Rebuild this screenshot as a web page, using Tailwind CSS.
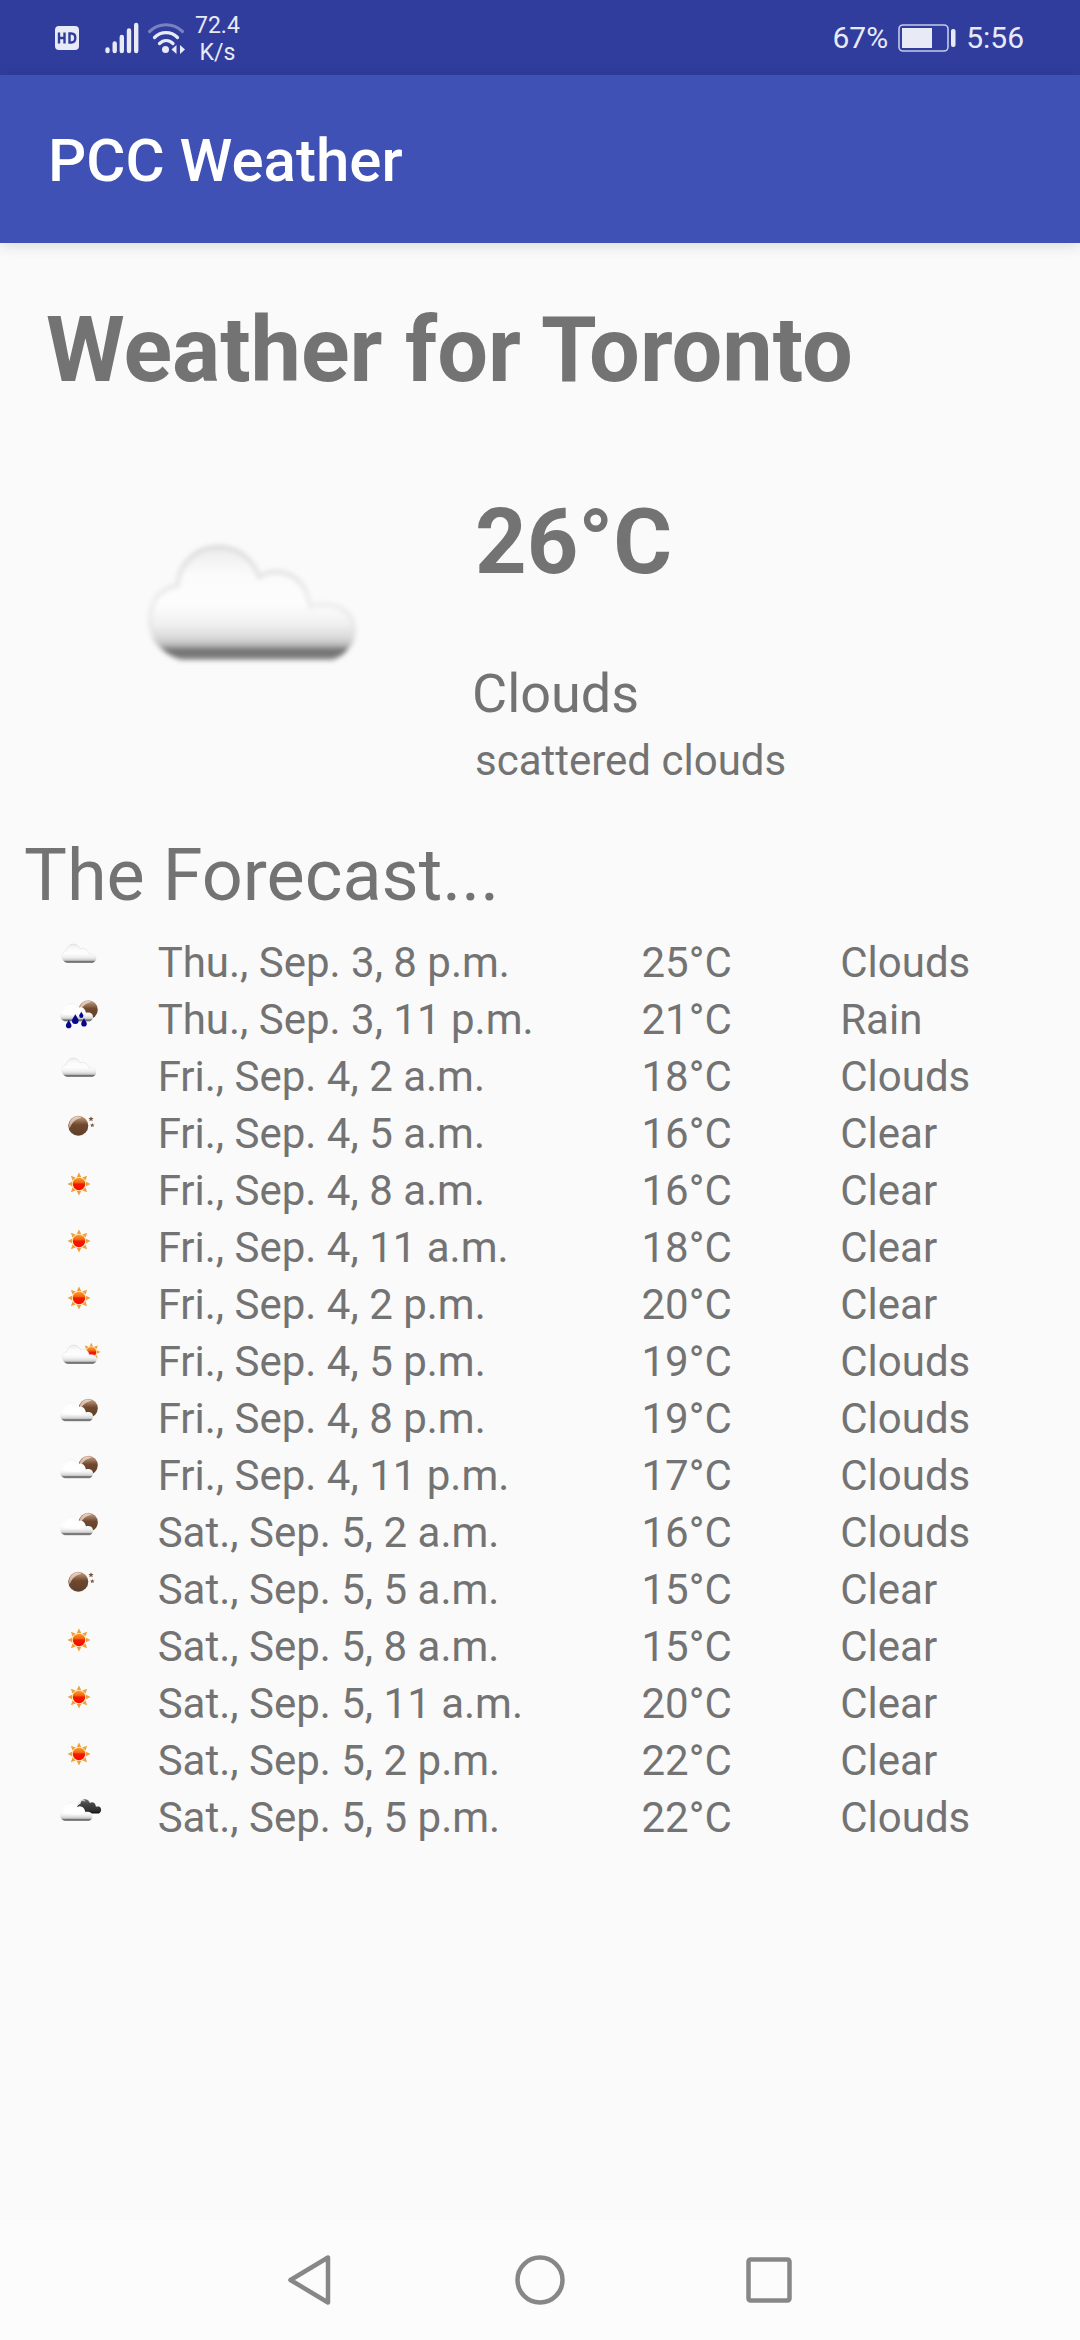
<!DOCTYPE html>
<html lang="en">
<head>
<meta charset="utf-8">
<meta name="viewport" content="width=device-width, initial-scale=1">
<title>PCC Weather</title>
<script src="https://cdn.jsdelivr.net/npm/@tailwindcss/browser@4"></script>
</head>
<body class="flex min-h-screen flex-col bg-[#fafafa] font-['Roboto',sans-serif] text-[#737373]">

<!-- Shared weather icon symbols, 50x50 units each -->
<svg class="absolute size-0" aria-hidden="true">
  <defs>
    <linearGradient id="cloudFill" x1="0" y1="0" x2="0" y2="1">
      <stop offset="0" stop-color="#ececec"/><stop offset=".25" stop-color="#fbfbfb"/><stop offset=".5" stop-color="#fdfdfd"/>
      <stop offset=".68" stop-color="#f1f1f1"/><stop offset=".8" stop-color="#dadada"/><stop offset=".86" stop-color="#c2c2c2"/>
      <stop offset=".91" stop-color="#747474"/><stop offset=".95" stop-color="#727272"/><stop offset="1" stop-color="#969696"/>
    </linearGradient>
    <linearGradient id="cloudEdge" x1="0" y1="0" x2="0" y2="1">
      <stop offset="0" stop-color="#d9d9d9"/><stop offset=".5" stop-color="#ececec"/><stop offset=".8" stop-color="#dcdcdc" stop-opacity=".6"/><stop offset=".9" stop-color="#888" stop-opacity="0"/>
    </linearGradient>
    <linearGradient id="darkCloud" x1="0" y1="0" x2="0" y2="1">
      <stop offset="0" stop-color="#707070"/><stop offset=".35" stop-color="#454545"/><stop offset=".75" stop-color="#333"/><stop offset="1" stop-color="#111"/>
    </linearGradient>
    <linearGradient id="moonFill" x1="0" y1="0" x2="0" y2="1">
      <stop offset="0" stop-color="#c9a58c"/><stop offset=".3" stop-color="#8f684c"/><stop offset=".45" stop-color="#70482d"/><stop offset="1" stop-color="#5e402c"/>
    </linearGradient>
    <linearGradient id="sunFill" x1="0" y1="0" x2="0" y2="1">
      <stop offset="0" stop-color="#ff9d2e"/><stop offset=".4" stop-color="#f2600c"/><stop offset=".5" stop-color="#f01a00"/><stop offset="1" stop-color="#ff0a00"/>
    </linearGradient>
    <filter id="soft" x="-10%" y="-10%" width="120%" height="120%"><feGaussianBlur stdDeviation="0.4"/></filter>
    <path id="cloudPath" d="M5.1 19C2.3 18 .6 16.2.3 14.2 0 13 0 11.8.2 10.6.6 8.4 2.4 6.9 4.6 6.6 4.8 2.8 7.8.2 11.4.2c3.4 0 5.7 2 6.8 5 1.2-.9 2.4-1 3.6-.8 2.8.4 4.3 2.4 4.9 5.7 1.2-.4 2.6-.4 4-.1 2.3.5 3.4 2.2 3.3 4.4-.1 2-1.3 3.7-3.5 4.6Z"/>
    <g id="cloudShape">
      <use href="#cloudPath" fill="url(#cloudFill)"/>
      <use href="#cloudPath" fill="none" stroke="url(#cloudEdge)" stroke-width=".7"/>
    </g>
    <g id="whiteCloud">
      <use href="#cloudPath" fill="url(#cloudFill)"/>
      <path d="M4.8 7C5 3.200 7.800.8 11.400.8c3.400 0 5.200 2 6.300 5 1.200-.9 2.900-1 4.100-.8 2.400.5 3.700 2.400 4.300 5.700L20 13 3 12Z" fill="#fff" opacity=".8"/>
    </g>
    <g id="moonShape">
      <circle r="10" fill="url(#moonFill)"/>
      <path d="M-8.500 2.500A8.500 8.500 0 0 1 3.500-8C-2.500-7-6.500-3.500-8.500 2.500Z" fill="#f5e6dc" opacity=".7"/>
    </g>
    <g id="sunShape">
      <circle r="7.600" fill="#ffe7b0"/>
      <g fill="#eda040">
        <path id="ray" d="M0-11.500 2.200-7H-2.200Z"/>
        <use href="#ray" transform="rotate(45)"/><use href="#ray" transform="rotate(90)"/><use href="#ray" transform="rotate(135)"/>
        <use href="#ray" transform="rotate(180)"/><use href="#ray" transform="rotate(225)"/><use href="#ray" transform="rotate(270)"/><use href="#ray" transform="rotate(315)"/>
      </g>
      <circle r="6.200" fill="url(#sunFill)"/>
    </g>
    <path id="drop" d="M0-5C.7-2.500 3.300-.6 3.300 1.700A3.300 3.300 0 0 1-3.300 1.700C-3.300-.6-.7-2.500 0-5Z" fill="#06068f"/>
    <path id="star" d="M0-2.700.8-.9 2.600-.9 1.200.4 1.700 2.300 0 1.200-1.700 2.300-1.200.4-2.600-.9-.8-.9Z" fill="#80563d"/>
  </defs>
  <symbol id="scattered" viewBox="0 0 50 50"><use href="#cloudShape" x="8" y="16"/></symbol>
  <symbol id="rain" viewBox="0 0 50 50">
    <use href="#moonShape" transform="translate(34.300 24.700) scale(.95)"/>
    <use href="#whiteCloud" transform="translate(6 18) scale(.97)"/>
    <use href="#drop" transform="translate(21.300 34)"/>
    <use href="#drop" transform="translate(27.300 29.700) scale(.65)"/>
    <use href="#drop" transform="translate(14.700 39) scale(.85)"/>
    <use href="#drop" transform="translate(30 37.300) scale(.85)"/>
  </symbol>
  <symbol id="night" viewBox="0 0 50 50">
    <use href="#moonShape" transform="translate(24.300 26.700)"/>
    <use href="#star" x="37" y="20"/><use href="#star" transform="translate(38.300 26.300) scale(.85)"/>
  </symbol>
  <symbol id="sun" viewBox="0 0 50 50"><use href="#sunShape" x="25" y="28"/></symbol>
  <symbol id="few-day" viewBox="0 0 50 50">
    <use href="#sunShape" transform="translate(37.300 25) scale(.8)"/>
    <use href="#cloudShape" x="8.500" y="18"/>
  </symbol>
  <symbol id="few-night" viewBox="0 0 50 50">
    <use href="#moonShape" transform="translate(34.300 24.300) scale(.95)"/>
    <use href="#whiteCloud" transform="translate(6 18.300) scale(.97 1)"/>
  </symbol>
  <symbol id="broken" viewBox="0 0 50 50">
    <use href="#cloudPath" transform="translate(23 16) scale(.71 .76)" fill="url(#darkCloud)"/>
    <path d="M24 22c.5-3.500 3.500-5.500 7-4" fill="none" stroke="#ddd" stroke-width="1"/>
    <use href="#whiteCloud" transform="translate(6 19) scale(.95 1)"/>
  </symbol>
</svg>

<!-- Status bar -->
<div class="flex h-[75px] items-center justify-between bg-[#303d9d] pr-[56px] pl-[55px] text-[#e8eaf6]">
  <div class="flex items-center">
    <svg class="h-6 w-6" viewBox="0 0 24 24" role="img" aria-label="HD voice">
      <rect width="24" height="24" rx="4" fill="#e8eaf6"/>
      <path d="M4 6.500v11M9.500 6.500v11M4 12h5.500M14.500 7.500v9h1.800c3 0 4-1.500 4-4.500s-1-4.500-4-4.500Z" fill="none" stroke="#303d9d" stroke-width="2.400"/>
    </svg>
    <svg class="ml-[26px] h-8 w-[34px]" viewBox="0 0 34 32" role="img" aria-label="Signal strength" stroke="#e8eaf6" stroke-width="4.400" stroke-linecap="round">
      <path d="M2.500 27.500v1.500M9.700 21.500V29M16.800 15V29M24 8.500V29M31.200 3V29"/>
    </svg>
    <svg class="ml-2 h-8 w-[38px]" viewBox="0 0 38 32" role="img" aria-label="Wi-Fi" fill="none" stroke="#e8eaf6" stroke-width="3.200" stroke-linecap="round">
      <path d="M2.500 9.500c9.500-9 23.500-9 33 0" stroke-opacity=".4"/>
      <path d="M7.500 15.500c6.500-6.500 16.500-6.500 23 0M12.500 21.500c4-4 9.500-4 13.500 0"/>
      <circle cx="18.500" cy="27.500" r="3.500" fill="#e8eaf6" stroke="none"/>
      <path d="M29.500 23v9l-5-4.500ZM33 23l5 4.500-5 4.500Z" fill="#e8eaf6" stroke="none"/>
    </svg>
    <p class="ml-[10px] pt-[2px] text-center text-[23px]/[27px]">72.4<br>K/s</p>
  </div>
  <div class="flex items-center gap-[10px] text-[30px]/[36px]">
    <span>67%</span>
    <svg class="h-7 w-[58px]" viewBox="0 0 58 28" role="img" aria-label="Battery">
      <rect x="1" y="1" width="49" height="26" rx="4" fill="none" stroke="#c5cae9" stroke-width="1.600"/>
      <rect x="4" y="4" width="30" height="20" fill="#e8eaf6"/>
      <rect x="53" y="5" width="4.500" height="18" rx="2" fill="#e8eaf6"/>
    </svg>
    <span>5:56</span>
  </div>
</div>

<!-- App bar -->
<header class="flex h-[168px] items-center bg-[#3f51b5] px-12 pt-1 shadow-[0_2px_14px_rgba(0,0,0,0.14)]">
  <h1 class="text-[60px]/[70px] font-medium text-white">PCC Weather</h1>
</header>

<main class="flex-1">
  <h2 class="pt-[55px] pl-[46px] text-[90px]/[106px] font-bold">Weather for Toronto</h2>

  <section class="flex gap-[70px] pt-[46px] pl-[102px]" aria-label="Current weather">
    <svg class="size-[300px] shrink-0" viewBox="0 0 50 50" role="img" aria-label="Clouds"><g filter="url(#soft)"><use href="#cloudShape" x="8" y="16"/></g></svg>
    <div class="pt-10">
      <p class="pl-[3px] text-[90px]/[106px] font-bold">26°C</p>
      <p class="pt-[66px] text-[54px]/[64px]">Clouds</p>
      <p class="pt-[10px] pl-[3px] text-[42px]/[50px]">scattered clouds</p>
    </div>
  </section>

  <h3 class="pt-12 pl-6 text-[72px]/[84px]">The Forecast...</h3>
  <table class="mt-4 w-full table-fixed text-left text-[42px]/[57px] [&_svg]:ml-[54px] [&_svg]:h-[50px] [&_svg]:w-[50px] [&_td]:h-[57px] [&_td]:p-0 [&_td]:align-top [&_svg]:-mt-[6px]" aria-label="Forecast">
    <colgroup><col class="w-[14.6%]"><col class="w-[44.8%]"><col class="w-[18.4%]"><col></colgroup>
    <tbody>
      <tr><td><svg aria-hidden="true"><use href="#scattered"/></svg></td><td>Thu., Sep. 3, 8 p.m.</td><td>25°C</td><td>Clouds</td></tr>
      <tr><td><svg aria-hidden="true"><use href="#rain"/></svg></td><td>Thu., Sep. 3, 11 p.m.</td><td>21°C</td><td>Rain</td></tr>
      <tr><td><svg aria-hidden="true"><use href="#scattered"/></svg></td><td>Fri., Sep. 4, 2 a.m.</td><td>18°C</td><td>Clouds</td></tr>
      <tr><td><svg aria-hidden="true"><use href="#night"/></svg></td><td>Fri., Sep. 4, 5 a.m.</td><td>16°C</td><td>Clear</td></tr>
      <tr><td><svg aria-hidden="true"><use href="#sun"/></svg></td><td>Fri., Sep. 4, 8 a.m.</td><td>16°C</td><td>Clear</td></tr>
      <tr><td><svg aria-hidden="true"><use href="#sun"/></svg></td><td>Fri., Sep. 4, 11 a.m.</td><td>18°C</td><td>Clear</td></tr>
      <tr><td><svg aria-hidden="true"><use href="#sun"/></svg></td><td>Fri., Sep. 4, 2 p.m.</td><td>20°C</td><td>Clear</td></tr>
      <tr><td><svg aria-hidden="true"><use href="#few-day"/></svg></td><td>Fri., Sep. 4, 5 p.m.</td><td>19°C</td><td>Clouds</td></tr>
      <tr><td><svg aria-hidden="true"><use href="#few-night"/></svg></td><td>Fri., Sep. 4, 8 p.m.</td><td>19°C</td><td>Clouds</td></tr>
      <tr><td><svg aria-hidden="true"><use href="#few-night"/></svg></td><td>Fri., Sep. 4, 11 p.m.</td><td>17°C</td><td>Clouds</td></tr>
      <tr><td><svg aria-hidden="true"><use href="#few-night"/></svg></td><td>Sat., Sep. 5, 2 a.m.</td><td>16°C</td><td>Clouds</td></tr>
      <tr><td><svg aria-hidden="true"><use href="#night"/></svg></td><td>Sat., Sep. 5, 5 a.m.</td><td>15°C</td><td>Clear</td></tr>
      <tr><td><svg aria-hidden="true"><use href="#sun"/></svg></td><td>Sat., Sep. 5, 8 a.m.</td><td>15°C</td><td>Clear</td></tr>
      <tr><td><svg aria-hidden="true"><use href="#sun"/></svg></td><td>Sat., Sep. 5, 11 a.m.</td><td>20°C</td><td>Clear</td></tr>
      <tr><td><svg aria-hidden="true"><use href="#sun"/></svg></td><td>Sat., Sep. 5, 2 p.m.</td><td>22°C</td><td>Clear</td></tr>
      <tr><td><svg aria-hidden="true"><use href="#broken"/></svg></td><td>Sat., Sep. 5, 5 p.m.</td><td>22°C</td><td>Clouds</td></tr>
    </tbody>
  </table>
</main>

<!-- System navigation -->
<nav class="flex h-[120px] items-center justify-center gap-[180px] bg-[#fcfcfc]" aria-label="System navigation">
  <button type="button" aria-label="Back"><svg class="size-[50px]" viewBox="0 0 50 50" fill="none" stroke="#878787" stroke-width="4.500" stroke-linejoin="round"><path d="M43 2.500v45L5.500 25Z"/></svg></button>
  <button type="button" aria-label="Home"><svg class="size-[50px]" viewBox="0 0 50 50" fill="none" stroke="#878787" stroke-width="4.500"><circle cx="25" cy="25" r="22.500"/></svg></button>
  <button type="button" aria-label="Recent apps"><svg class="size-[50px]" viewBox="0 0 50 50" fill="none" stroke="#878787" stroke-width="4.500"><rect x="3.500" y="4.500" width="41" height="41" rx="2"/></svg></button>
</nav>
</body>
</html>
